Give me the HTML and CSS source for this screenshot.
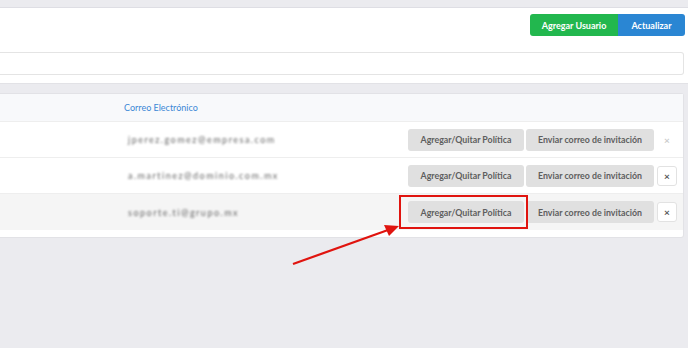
FILE: index.html
```html
<!DOCTYPE html>
<html lang="es">
<head>
  <meta charset="UTF-8">
  <title>Usuarios</title>
  <link rel="stylesheet" href="styles.css">
</head>
<body>
  <div class="topbar"></div>

  <div class="panel">
    <div class="toolbar">
      <button class="btn-add">Agregar Usuario</button>
      <button class="btn-refresh">Actualizar</button>
    </div>
    <input class="search" type="text">
  </div>

  <div class="table-panel">
    <div class="row head">
      <div class="col-email">Correo Electrónico</div>
    </div>
    <div class="row">
      <div class="col-email"><span class="blur">jperez.gomez@empresa.com</span></div>
      <div class="actions">
        <button class="btn-grey">Agregar/Quitar Política</button>
        <button class="btn-grey wide">Enviar correo de invitación</button>
        <button class="btn-x plain">×</button>
      </div>
    </div>
    <div class="row">
      <div class="col-email"><span class="blur">a.martinez@dominio.com.mx</span></div>
      <div class="actions">
        <button class="btn-grey">Agregar/Quitar Política</button>
        <button class="btn-grey wide">Enviar correo de invitación</button>
        <button class="btn-x">×</button>
      </div>
    </div>
    <div class="row hover">
      <div class="col-email"><span class="blur">soporte.ti@grupo.mx</span></div>
      <div class="actions">
        <button class="btn-grey">Agregar/Quitar Política</button>
        <button class="btn-grey wide">Enviar correo de invitación</button>
        <button class="btn-x">×</button>
      </div>
    </div>
  </div>

  <!-- annotation drawn over the screenshot -->
  <svg class="annotation" width="688" height="348" viewBox="0 0 688 348">
    <rect x="400" y="196" width="127" height="32" fill="none" stroke="#e0140f" stroke-width="2"/>
    <line x1="293" y1="264" x2="388" y2="230" stroke="#e0140f" stroke-width="2.2"/>
    <polygon points="399,226 384,225 389,236" fill="#e0140f"/>
  </svg>
</body>
</html>
```

FILE: styles.css
```css
body {
  margin: 0;
  padding: 0;
  background-color: #ebebef;
  font-family: Lato, "Open Sans", sans-serif;
  height: 348px;
  overflow: hidden;
  position: relative;
}

button {
  font-family: Lato, sans-serif;
  border: none;
  cursor: pointer;
  padding: 0;
}

.topbar {
  height: 7px;
  border-bottom: 1px solid #dedee4;
}

.panel {
  background-color: #fff;
  padding: 6px 4px 8px 0;
  border-bottom: 1px solid #e2e2e6;
}

.toolbar {
  display: flex;
  justify-content: flex-end;
  margin-right: -1px;
}

.toolbar button {
  height: 22px;
  color: #fff;
  font-size: 9px;
  font-weight: bold;
}

.btn-add {
  width: 88px;
  background-color: #22b74e;
  border-radius: 3px 0 0 3px;
}

.btn-refresh {
  width: 67px;
  background-color: #2a86d3;
  border-radius: 0 3px 3px 0;
}

.search {
  display: block;
  box-sizing: border-box;
  width: 100%;
  height: 23px;
  margin-top: 16px;
  border: 1px solid #e4e4e4;
  border-left: none;
  border-radius: 0 3px 3px 0;
}

.table-panel {
  background-color: #fff;
  margin: 9px 4px 0 0;
  border: 1px solid #e2e2e6;
  border-left: none;
  border-radius: 0 3px 3px 0;
  padding-bottom: 7px;
}

.row {
  display: flex;
  align-items: center;
  height: 35px;
  border-bottom: 1px solid #eeeeee;
}

.row.head {
  height: 27px;
  background-color: #f8f9fb;
}

.row.hover {
  background-color: #f5f5f5;
  border-bottom: none;
  height: 36px;
}

.col-email {
  margin-left: 124px;
  width: 230px;
  font-size: 9px;
}

.head .col-email {
  color: #3c88d6;
}

.blur {
  color: #666;
  margin-left: 4px;
  letter-spacing: 1.5px;
  filter: blur(1.3px);
}

.actions {
  margin-left: auto;
  display: flex;
  align-items: center;
  gap: 2px;
  padding-right: 6px;
}

.btn-grey {
  width: 116px;
  height: 22px;
  background-color: #e0e0e0;
  color: #5e5e5e;
  font-size: 8.8px;
  font-weight: bold;
  border-radius: 3px;
}

.btn-grey.wide {
  width: 128px;
}

.btn-x {
  width: 20px;
  height: 20px;
  margin-left: 1px;
  background-color: #fff;
  border: 1px solid #e2e2e2;
  border-radius: 3px;
  color: #555;
  font-size: 10px;
  font-weight: bold;
  line-height: 16px;
}

.btn-x.plain {
  border-color: transparent;
  color: #ccc;
}

.annotation {
  position: absolute;
  top: 0;
  left: 0;
  pointer-events: none;
}
```
